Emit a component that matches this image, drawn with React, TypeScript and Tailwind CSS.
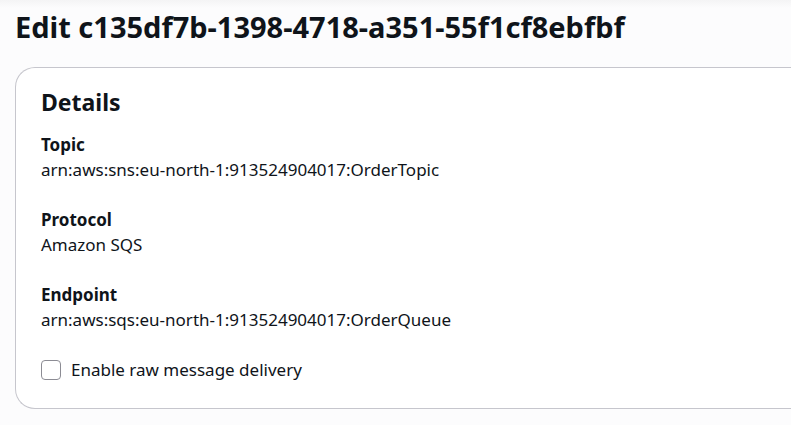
const fields = [
  { label: "Topic", value: "arn:aws:sns:eu-north-1:913524904017:OrderTopic" },
  { label: "Protocol", value: "Amazon SQS" },
  { label: "Endpoint", value: "arn:aws:sqs:eu-north-1:913524904017:OrderQueue" },
];

export default function App() {
  return (
    <main className="min-h-screen overflow-hidden bg-[#fcfcfd] bg-linear-to-b from-[#f4f4f5] to-[#fcfcfd] to-[8px] pb-4 pl-[15px] pt-[7px] font-['Noto_Sans',sans-serif] text-[#0f141a]">
      <h1 className="whitespace-nowrap text-[29px] font-bold leading-[40px]">
        Edit c135df7b-1398-4718-a351-55f1cf8ebfbf
      </h1>
      <section className="mt-5 rounded-l-[20px] border border-r-0 border-[#c6c6cd] bg-white px-[25px] pb-[26px] pt-[19px]">
        <h2 className="text-[23px] font-bold leading-[30px]">Details</h2>
        <dl className="mt-[15px] flex flex-col gap-[25px] text-[17px] leading-[25px]">
          {fields.map((field) => (
            <div key={field.label}>
              <dt className="font-bold">{field.label}</dt>
              <dd>{field.value}</dd>
            </div>
          ))}
        </dl>
        <label className="mt-[25px] flex items-center gap-[10px] text-[17px] leading-[25px]">
          <input
            type="checkbox"
            className="size-5 appearance-none rounded-[4px] border border-[#8c8c94] bg-white checked:bg-[#006ce0]"
          />
          Enable raw message delivery
        </label>
      </section>
    </main>
  );
}
